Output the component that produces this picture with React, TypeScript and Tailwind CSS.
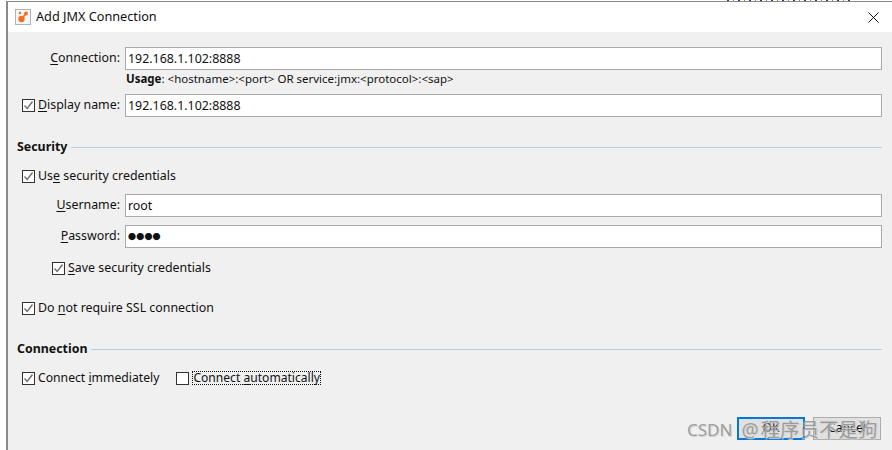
import type { ReactNode } from "react";

const FONT = "font-['Noto_Sans','Noto_Sans_CJK_SC',sans-serif]";

function Check({ checked = true }: { checked?: boolean }) {
  return (
    <span className="flex h-[13px] w-[13px] shrink-0 items-center justify-center border border-[#333333] bg-white">
      {checked && (
        <svg width="11" height="11" viewBox="0 0 11 11" fill="none">
          <path d="M1.5 5.5 L4.2 8.5 L9.5 1.5" stroke="#6a6a6a" strokeWidth="1.3" />
        </svg>
      )}
    </span>
  );
}

function U({ children }: { children: ReactNode }) {
  return <span className="underline underline-offset-2">{children}</span>;
}

function TextField({ children, className = "" }: { children: ReactNode; className?: string }) {
  return (
    <div className={`flex h-[23px] min-w-0 flex-1 items-center border border-[#a9a9a9] bg-white pl-[2px] pt-[1px] ${className}`}>
      {children}
    </div>
  );
}

function CheckRow({ children, className = "" }: { children: ReactNode; className?: string }) {
  return (
    <div className={`flex h-[20px] items-center gap-[3px] ${className}`}>
      <Check />
      <span>{children}</span>
    </div>
  );
}

function Section({ title, className = "" }: { title: string; className?: string }) {
  return (
    <div className={`flex h-[20px] items-center gap-[4px] ${className}`}>
      <span className="font-bold">{title}</span>
      <div className="h-px flex-1 bg-[#b4cde6]" />
    </div>
  );
}

export default function App() {
  return (
    <div className={`${FONT} relative h-[450px] w-[892px] overflow-hidden bg-white pl-[6px] pt-[1px] text-[12.4px] leading-none text-[#111111]`}>
      {/* bit of the window behind, showing above the dialog */}
      <div className="absolute left-[727px] top-0 h-[1px] w-[123px] bg-[repeating-linear-gradient(90deg,#3a3a6a_0,#3a3a6a_2px,#ffffff_2px,#ffffff_6px,#b4772e_6px,#b4772e_7px,#ffffff_7px,#ffffff_11px)]" />

      <div className="flex h-[449px] flex-col border-l-2 border-t border-[#8a8a8a]">
        {/* title bar */}
        <div className="flex h-[30px] shrink-0 items-center bg-white pl-[7px] pr-[13px]">
          <div className="flex h-[16px] w-[16px] items-center justify-center border border-[#a9b4bd] bg-[#f4f6f8]">
            <svg width="14" height="14" viewBox="0 0 14 14">
              <circle cx="5.5" cy="9" r="3.2" fill="#f47120" />
              <circle cx="10" cy="3.5" r="2" fill="#f47120" />
              <circle cx="4" cy="3" r="1.3" fill="#f47120" />
              <path d="M5.5 9 L10 3.5" stroke="#f47120" strokeWidth="1.6" />
            </svg>
          </div>
          <span className="ml-[5px] pb-[1px] text-[12.7px]">Add JMX Connection</span>
          <svg className="ml-auto" width="11" height="11" viewBox="0 0 11 11">
            <path d="M.5.5 10.5 10.5M10.5.5.5 10.5" stroke="#111111" strokeWidth="1" />
          </svg>
        </div>

        {/* form */}
        <div className="flex flex-1 flex-col bg-[#f0f0f0] pl-[9px] pr-[10px] pt-[15px]">
          <div className="flex items-center">
            <span className="w-[103px] text-right">
              <U>C</U>onnection:
            </span>
            <TextField className="ml-[5px]">192.168.1.102:8888</TextField>
          </div>
          <div className="h-[18px] pl-[109px] text-[11.5px] leading-[18px]">
            <b>Usage</b>: &lt;hostname&gt;:&lt;port&gt; OR service:jmx:&lt;protocol&gt;:&lt;sap&gt;
          </div>
          <div className="mt-[6px] flex items-center pl-[5px]">
            <Check />
            <span className="ml-[3px] w-[87px] whitespace-nowrap">
              <U>D</U>isplay name:
            </span>
            <TextField>192.168.1.102:8888</TextField>
          </div>

          <Section title="Security" className="mt-[20px]" />
          <CheckRow className="ml-[5px] mt-[9px]">
            Us<U>e</U> security credentials
          </CheckRow>
          <div className="mt-[8px] flex items-center">
            <span className="w-[103px] text-right">
              <U>U</U>sername:
            </span>
            <TextField className="ml-[5px]">root</TextField>
          </div>
          <div className="mt-[8px] flex items-center">
            <span className="w-[103px] text-right">
              <U>P</U>assword:
            </span>
            <TextField className="ml-[5px]">
              <span className="text-[8px] tracking-[0.2px]">●●●●</span>
            </TextField>
          </div>
          <CheckRow className="ml-[35px] mt-[10px]">
            <U>S</U>ave security credentials
          </CheckRow>
          <CheckRow className="ml-[5px] mt-[20px]">
            Do <U>n</U>ot require SSL connection
          </CheckRow>

          <Section title="Connection" className="mt-[21px]" />
          <div className="mt-[9px] flex h-[20px] items-center pl-[5px] text-[12.2px]">
            <Check />
            <span className="ml-[3px]">
              Connect <U>i</U>mmediately
            </span>
            <span className="ml-[17px]">
              <Check checked={false} />
            </span>
            <span className="ml-[3px] border border-dotted border-[#111111] text-[12.1px]">
              Connect <U>a</U>utomatically
            </span>
          </div>

          {/* buttons */}
          <div className="mt-[29px] flex justify-end gap-[8px] pr-[1px] text-[12.2px]">
            <button className="h-[23px] w-[68px] border-2 border-[#0078d7] bg-[#e1e1e1]">OK</button>
            <button className="h-[23px] w-[68px] border border-[#adadad] bg-[#e1e1e1]">Cancel</button>
          </div>
        </div>
      </div>

      {/* watermark */}
      <div className="absolute left-[687px] top-[419px] flex items-center text-[17px] leading-[22px] text-[#8c8c8c]/80 [text-shadow:1px_1px_1px_#d0d0d0]">
        <span>CSDN</span>
        <span className="ml-[9px] text-[19px]">@</span>
        <span className="ml-[2px] text-[19.5px]">程序员不是狗</span>
      </div>
    </div>
  );
}
